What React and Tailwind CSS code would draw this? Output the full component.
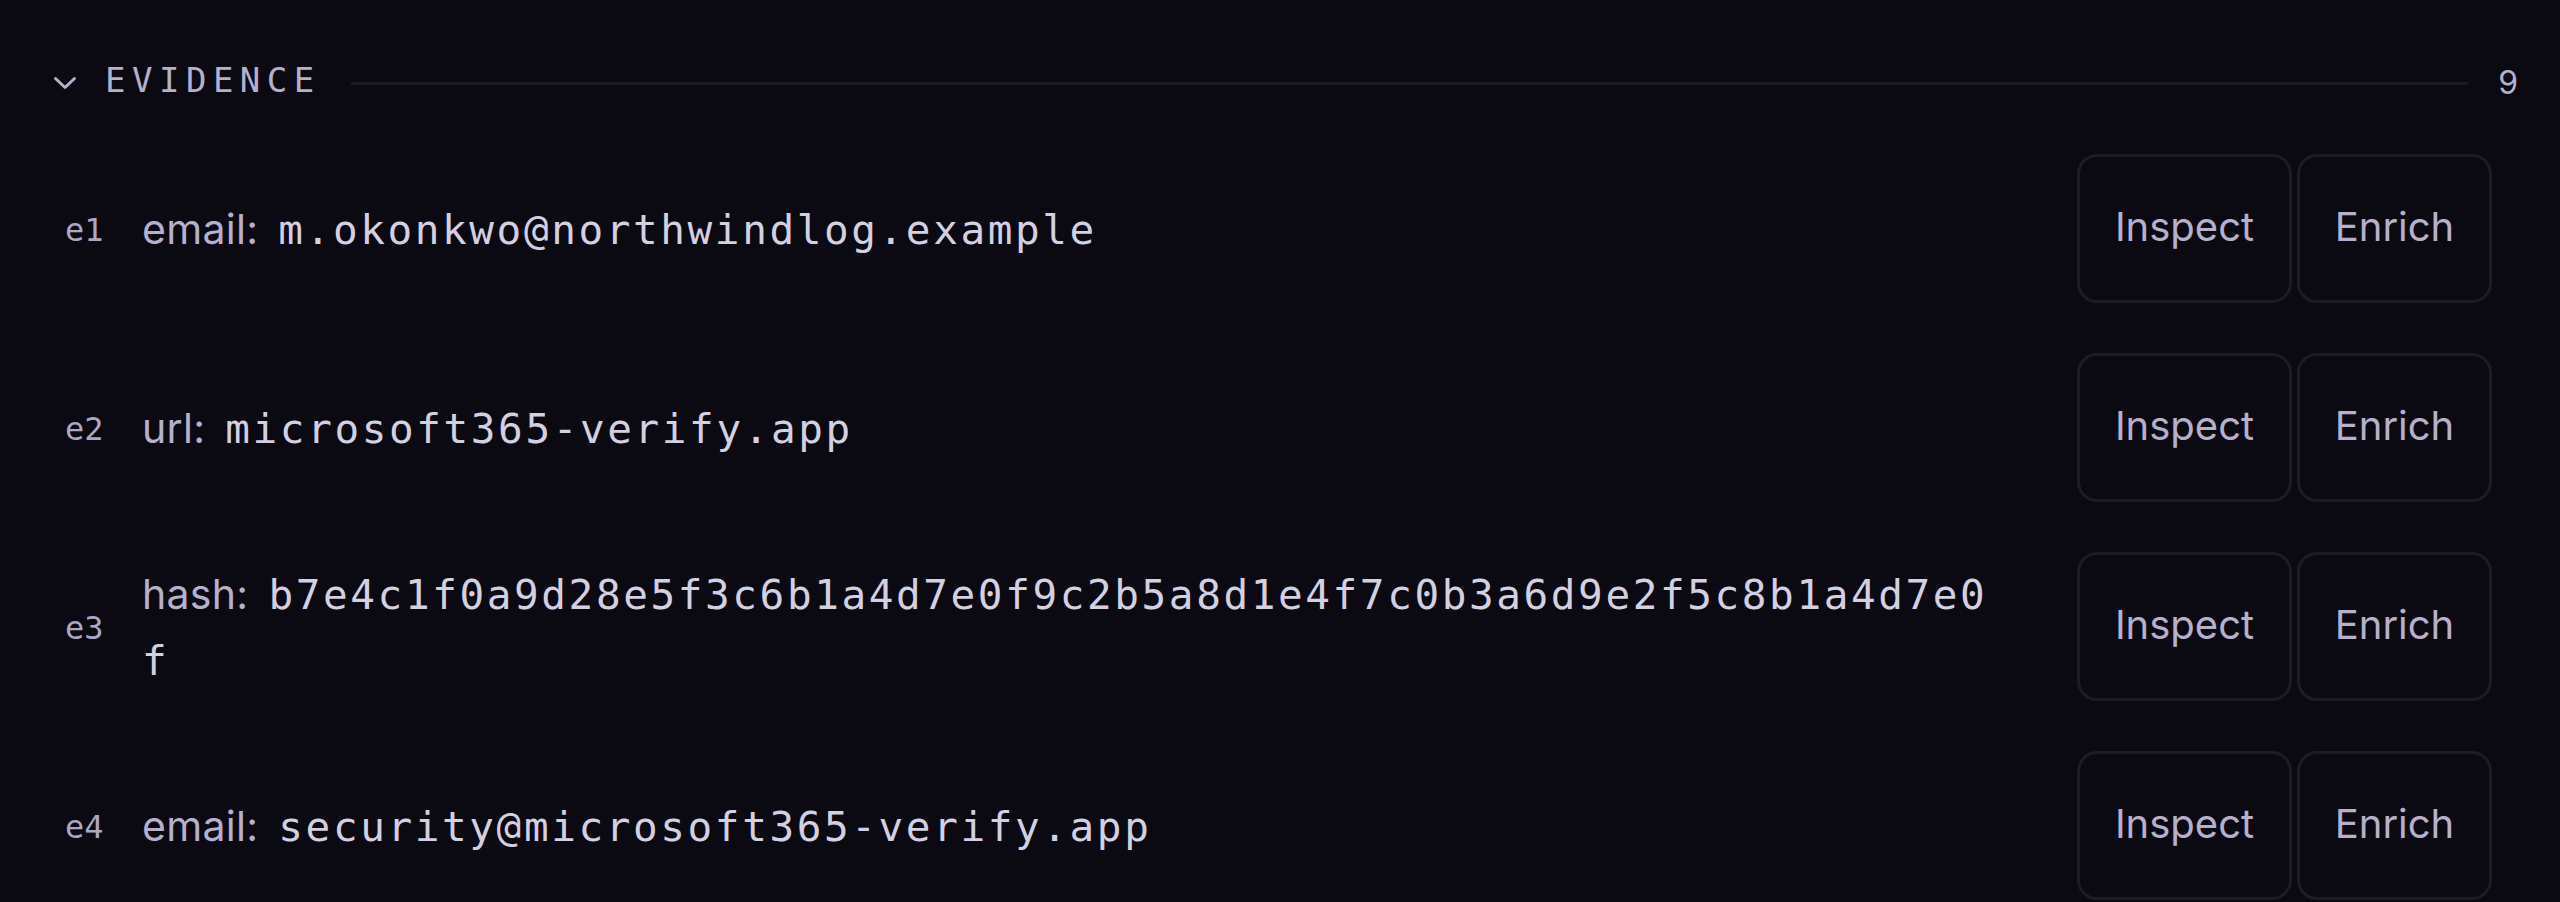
import React from "react";

const evidence = [
    { id: "e1", kind: "email", value: "m.okonkwo@northwindlog.example" },
    { id: "e2", kind: "url", value: "microsoft365-verify.app" },
    { id: "e3", kind: "hash", value: "b7e4c1f0a9d28e5f3c6b1a4d7e0f9c2b5a8d1e4f7c0b3a6d9e2f5c8b1a4d7e0f" },
    { id: "e4", kind: "email", value: "security@microsoft365-verify.app" },
];

const sans = "font-['Inter',sans-serif]";
const mono = "font-['DejaVu_Sans_Mono',monospace]";

const EvidenceRow = ({ item }) => {
    return (
        <div className="flex items-center">
            <span className={`${mono} w-[77px] shrink-0 pt-[2px] text-[32px] text-[#aca7c2]`}>{item.id}</span>
            <div className="flex-1 break-all pr-[72px] text-[41px] leading-[64px]">
                <span className={`${sans} mr-[20px] tracking-[0.3px] text-[#b6b0cc]`}>{item.kind}:</span>
                <span className={`${mono} tracking-[2.6px] text-[#d3d0e2]`}>{item.value}</span>
            </div>
            <div className="flex shrink-0 gap-[5px]">
                <button className={`${sans} h-[149px] w-[215px] rounded-[20px] border-[3px] border-[#1c1b26] pb-[4px] text-[40px] text-[#b6b0cc]`}>
                    Inspect
                </button>
                <button className={`${sans} h-[149px] w-[195px] rounded-[20px] border-[3px] border-[#1c1b26] pb-[4px] text-[40px] text-[#b6b0cc]`}>
                    Enrich
                </button>
            </div>
        </div>
    );
};

const App = () => {
    return (
        <div className="min-h-screen bg-[#0b0a13] pt-[56px]">
            <div className="flex h-12 items-center pl-[53px] pr-[42px]">
                <svg width="24" height="14" viewBox="0 0 24 14" fill="none" className="mt-[6px] shrink-0">
                    <polyline points="2.5,2.5 12,11.5 21.5,2.5" stroke="#b6b0cc" strokeWidth="3" strokeLinecap="round" strokeLinejoin="round" />
                </svg>
                <span className={`${mono} ml-[28px] text-[34px] tracking-[6.5px] text-[#b6b0cc]`}>EVIDENCE</span>
                <div className="mx-[30px] mt-[6px] h-[3px] flex-1 bg-[#1a1922]" />
                <span className={`${sans} mt-[6px] text-[32px] text-[#b6b0cc]`}>9</span>
            </div>
            <div className="mt-[50px] flex flex-col gap-[50px] pl-[65px] pr-[68px]">
                {evidence.map((item) => (
                    <EvidenceRow key={item.id} item={item} />
                ))}
            </div>
        </div>
    );
};

export default App;
